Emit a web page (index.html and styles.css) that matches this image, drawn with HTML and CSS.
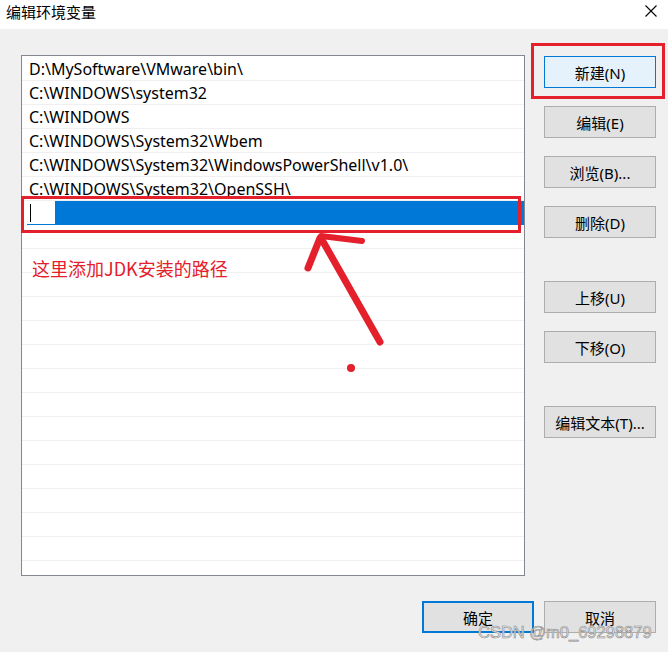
FILE: index.html
```html
<!DOCTYPE html>
<html lang="zh-CN">
<head>
    <meta charset="UTF-8">
    <meta name="viewport" content="width=device-width, initial-scale=1.0">
    <title>编辑环境变量</title>
    <link rel="stylesheet" href="styles.css">
</head>
<body>
    <div class="titlebar">
        <span class="title">编辑环境变量</span>
        <svg class="close" width="12" height="12" viewBox="0 0 12 12">
            <path d="M0.5 0.5 L11.5 11.5 M11.5 0.5 L0.5 11.5" stroke="#000" stroke-width="1.1" fill="none"/>
        </svg>
    </div>

    <div class="main">
        <div class="list">
            <div class="row">D:\MySoftware\VMware\bin\</div>
            <div class="row">C:\WINDOWS\system32</div>
            <div class="row">C:\WINDOWS</div>
            <div class="row">C:\WINDOWS\System32\Wbem</div>
            <div class="row">C:\WINDOWS\System32\WindowsPowerShell\v1.0\</div>
            <div class="row">C:\WINDOWS\System32\OpenSSH\</div>
            <div class="row editing">
                <div class="edit-box">
                    <div class="caret-box"><span class="caret"></span></div>
                </div>
            </div>
            <div class="row"></div>
            <div class="row"></div>
            <div class="row"></div>
            <div class="row"></div>
            <div class="row"></div>
            <div class="row"></div>
            <div class="row"></div>
            <div class="row"></div>
            <div class="row"></div>
            <div class="row"></div>
            <div class="row"></div>
            <div class="row"></div>
            <div class="row"></div>
            <div class="row"></div>
            <div class="row"></div>
        </div>

        <div class="side">
            <div class="group">
                <button class="btn btn-hot">新建(N)</button>
                <button class="btn">编辑(E)</button>
                <button class="btn">浏览(B)...</button>
                <button class="btn">删除(D)</button>
            </div>
            <div class="group">
                <button class="btn">上移(U)</button>
                <button class="btn">下移(O)</button>
            </div>
            <div class="group">
                <button class="btn">编辑文本(T)...</button>
            </div>
        </div>
    </div>

    <div class="footer">
        <button class="btn btn-default">确定</button>
        <button class="btn">取消</button>
    </div>

    <!-- annotations drawn over the dialog -->
    <div class="mark mark-new"></div>
    <div class="mark mark-row"></div>
    <div class="note">这里添加JDK安装的路径</div>
    <svg class="arrow" width="668" height="652" viewBox="0 0 668 652">
        <g stroke="#e3202c" stroke-linecap="round" fill="none">
            <path d="M321 238 L380 342" stroke-width="7"/>
            <path d="M320 238 L308 268" stroke-width="7"/>
            <path d="M321 236 L362 241" stroke-width="6"/>
        </g>
        <circle cx="351" cy="368" r="4" fill="#e3202c"/>
    </svg>

    <div class="watermark">CSDN @m0_69298879</div>
</body>
</html>
```

FILE: styles.css
```css
body {
    margin: 0;
    width: 668px;
    height: 652px;
    position: relative;
    overflow: hidden;
    background-color: #f0f0f0;
    font-family: "Noto Sans", "Noto Sans CJK SC", sans-serif;
    color: #000;
}

.titlebar {
    height: 29px;
    background-color: #fff;
    display: flex;
    justify-content: space-between;
    align-items: flex-start;
    padding: 3px 11px 0 6px;
    box-sizing: border-box;
}

.title {
    font-size: 15px;
    line-height: 19px;
}

.close {
    margin-top: 2px;
}

.main {
    display: flex;
    gap: 19px;
    padding: 26px 0 0 21px;
}

.list {
    width: 504px;
    height: 521px;
    box-sizing: border-box;
    border: 1px solid #828790;
    background-color: #fff;
    padding-top: 1px;
    overflow: hidden;
}

.row {
    height: 24px;
    box-sizing: border-box;
    border-bottom: 1px solid #f0f0f0;
    padding: 2px 0 0 7px;
    font-size: 16px;
    line-height: 21px;
    white-space: nowrap;
}

.row.editing {
    padding: 0 0 0 5px;
    border-bottom: none;
}

.edit-box {
    height: 24px;
    background-color: #0078d7;
}

.caret-box {
    width: 28px;
    height: 23px;
    background-color: #fff;
    position: relative;
}

.caret {
    position: absolute;
    left: 3px;
    top: 3px;
    width: 1px;
    height: 18px;
    background-color: #000;
}

.side {
    display: flex;
    flex-direction: column;
    gap: 43px;
    padding-top: 1px;
}

.group {
    display: flex;
    flex-direction: column;
    gap: 18px;
}

.btn {
    width: 112px;
    height: 32px;
    box-sizing: border-box;
    border: 1px solid #adadad;
    background-color: #e1e1e1;
    font-family: "Noto Sans", "Noto Sans CJK SC", sans-serif;
    font-size: 15px;
    color: #000;
    padding: 0;
}

.btn-hot {
    background-color: #e5f1fb;
    border-color: #0078d7;
}

.btn-default {
    border: 2px solid #0078d7;
}

.footer {
    display: flex;
    justify-content: flex-end;
    gap: 10px;
    padding: 25px 12px 0 0;
}

.mark {
    position: absolute;
    border: 3px solid #e3202c;
    box-sizing: border-box;
}

.mark-new {
    left: 531px;
    top: 43px;
    width: 134px;
    height: 56px;
}

.mark-row {
    left: 21px;
    top: 196px;
    width: 500px;
    height: 37px;
}

.note {
    position: absolute;
    left: 32px;
    top: 255px;
    font-family: "Noto Sans CJK SC", sans-serif;
    font-size: 18px;
    color: #e3202c;
}

.arrow {
    position: absolute;
    left: 0;
    top: 0;
    pointer-events: none;
}

.watermark {
    position: absolute;
    left: 478px;
    top: 623px;
    font-family: "Liberation Sans", sans-serif;
    font-size: 16.5px;
    color: #e6e6e6;
    -webkit-text-stroke: 0.6px #8c8c8c;
}
```
